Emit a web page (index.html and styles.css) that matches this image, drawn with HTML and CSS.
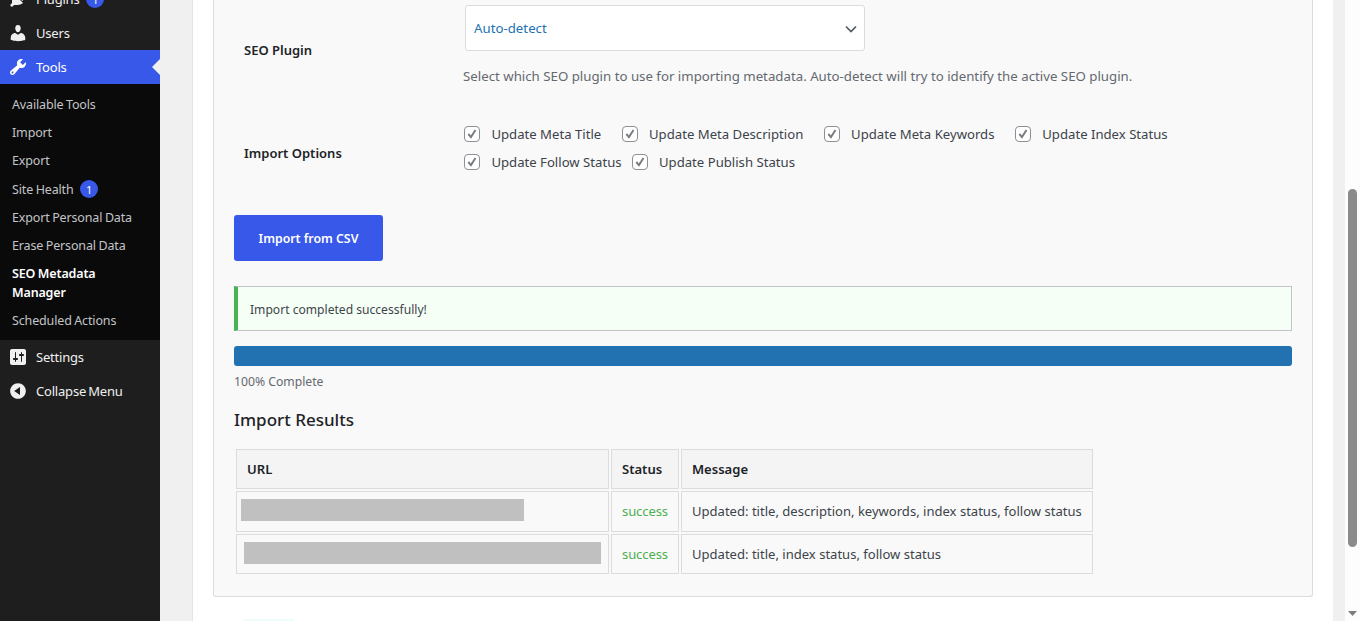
FILE: index.html
```html
<!DOCTYPE html>
<html lang="en">
  <head>
    <meta charset="UTF-8" />
    <title>SEO Metadata Manager</title>
    <link rel="stylesheet" href="styles.css">
  </head>
  <body>
    <nav class="sidebar">
      <ul class="menu">
        <li class="menu-item">
          <svg class="menu-icon" viewBox="0 0 20 20"><path d="M13.11 4.36L9.87 7.6 8 5.73l3.24-3.24c.35-.34 1.05-.2 1.56.32.52.51.66 1.21.31 1.55zm-8 1.77l.91-1.12 9.01 9.01-1.19.84c-.71.71-2.63 1.16-3.82 1.16H6.14L4.9 17.26c-.59.59-1.54.59-2.12 0-.59-.58-.59-1.53 0-2.12l1.24-1.24v-3.88c0-1.13.4-3.19 1.09-3.89zm7.26 3.97l3.24-3.24c.34-.35 1.04-.21 1.55.31.52.51.66 1.21.31 1.55l-3.24 3.25z"/></svg>
          Plugins <span class="count">1</span>
        </li>
        <li class="menu-item">
          <svg class="menu-icon" viewBox="0 0 20 20"><path d="M10 9.25c-2.27 0-2.73-3.44-2.73-3.44C7 4.02 7.82 2 9.97 2c2.16 0 2.98 2.02 2.71 3.81 0 0-.41 3.44-2.68 3.44zm0 2.57L12.72 10c2.39 0 4.52 2.33 4.52 4.53v2.49s-3.65 1.13-7.24 1.13c-3.65 0-7.24-1.13-7.24-1.13v-2.49c0-2.25 1.94-4.48 4.47-4.48z"/></svg>
          Users
        </li>
        <li class="menu-item current">
          <svg class="menu-icon" viewBox="0 0 20 20"><path d="M16.68 9.77c-1.34 1.34-3.3 1.67-4.95.99l-5.41 6.52c-.99.99-2.59.99-3.58 0s-.99-2.59 0-3.58l6.52-5.41c-.68-1.65-.35-3.61.99-4.95 1.28-1.28 3.12-1.62 4.72-1.06l-2.89 2.89 2.82 2.82 2.86-2.87c.53 1.58.18 3.39-1.08 4.65zM3.81 16.21c.4.39 1.04.39 1.43 0 .4-.4.4-1.04 0-1.43-.39-.4-1.03-.4-1.43 0-.39.39-.39 1.03 0 1.43z"/></svg>
          Tools
        </li>
        <li>
          <ul class="submenu">
            <li>Available Tools</li>
            <li>Import</li>
            <li>Export</li>
            <li>Site Health <span class="count">1</span></li>
            <li>Export Personal Data</li>
            <li>Erase Personal Data</li>
            <li class="active">SEO Metadata Manager</li>
            <li>Scheduled Actions</li>
          </ul>
        </li>
        <li class="menu-item">
          <svg class="menu-icon" viewBox="0 0 20 20"><path d="M18 16V4c0-1.1-.9-2-2-2H4c-1.1 0-2 .9-2 2v12c0 1.1.9 2 2 2h12c1.1 0 2-.9 2-2zM8 11h1c.55 0 1 .45 1 1s-.45 1-1 1H8v1.5c0 .28-.22.5-.5.5s-.5-.22-.5-.5V13H6c-.55 0-1-.45-1-1s.45-1 1-1h1V5.5c0-.28.22-.5.5-.5s.5.22.5.5V11zm5-2h-1c-.55 0-1-.45-1-1s.45-1 1-1h1V5.5c0-.28.22-.5.5-.5s.5.22.5.5V7h1c.55 0 1 .45 1 1s-.45 1-1 1h-1v5.5c0 .28-.22.5-.5.5s-.5-.22-.5-.5V9z"/></svg>
          Settings
        </li>
        <li class="menu-item">
          <svg class="menu-icon" viewBox="0 0 20 20"><path d="M10 2.16c4.33 0 7.84 3.51 7.84 7.84s-3.51 7.84-7.84 7.84S2.16 14.33 2.16 10 5.71 2.16 10 2.16zm2 11.72V6.12L6.18 9.97z"/></svg>
          Collapse Menu
        </li>
      </ul>
    </nav>

    <main class="content">
      <div class="wrap">
        <section class="panel">
          <div class="form-row plugin-row">
            <div class="form-label">SEO Plugin</div>
            <div class="form-field">
              <div class="select">
                Auto-detect
                <svg class="select-arrow" viewBox="0 0 12 8"><path d="M1 1.5l5 5 5-5" fill="none" stroke="#50575e" stroke-width="1.6"/></svg>
              </div>
              <p class="description">Select which SEO plugin to use for importing metadata. Auto-detect will try to identify the active SEO plugin.</p>
            </div>
          </div>

          <div class="form-row options-row">
            <div class="form-label">Import Options</div>
            <div class="checks">
              <label class="check"><span class="box"><svg viewBox="0 0 16 16"><path d="M3.8 8l3 3.5 5.2-8" fill="none" stroke="#777c80" stroke-width="2.2"/></svg></span>Update Meta Title</label>
              <label class="check"><span class="box"><svg viewBox="0 0 16 16"><path d="M3.8 8l3 3.5 5.2-8" fill="none" stroke="#777c80" stroke-width="2.2"/></svg></span>Update Meta Description</label>
              <label class="check"><span class="box"><svg viewBox="0 0 16 16"><path d="M3.8 8l3 3.5 5.2-8" fill="none" stroke="#777c80" stroke-width="2.2"/></svg></span>Update Meta Keywords</label>
              <label class="check"><span class="box"><svg viewBox="0 0 16 16"><path d="M3.8 8l3 3.5 5.2-8" fill="none" stroke="#777c80" stroke-width="2.2"/></svg></span>Update Index Status</label>
              <label class="check tight"><span class="box"><svg viewBox="0 0 16 16"><path d="M3.8 8l3 3.5 5.2-8" fill="none" stroke="#777c80" stroke-width="2.2"/></svg></span>Update Follow Status</label>
              <label class="check"><span class="box"><svg viewBox="0 0 16 16"><path d="M3.8 8l3 3.5 5.2-8" fill="none" stroke="#777c80" stroke-width="2.2"/></svg></span>Update Publish Status</label>
            </div>
          </div>

          <button class="import-btn">Import from CSV</button>

          <div class="notice">Import completed successfully!</div>

          <div class="progress"></div>
          <div class="progress-text">100% Complete</div>

          <h3 class="results-title">Import Results</h3>
          <table class="results">
            <thead>
              <tr>
                <th class="col-url">URL</th>
                <th class="col-status">Status</th>
                <th class="col-message">Message</th>
              </tr>
            </thead>
            <tbody>
              <tr class="row-first">
                <td class="url-cell"><span class="redacted first"></span></td>
                <td class="ok">success</td>
                <td>Updated: title, description, keywords, index status, follow status</td>
              </tr>
              <tr>
                <td class="url-cell"><span class="redacted second"></span></td>
                <td class="ok">success</td>
                <td>Updated: title, index status, follow status</td>
              </tr>
            </tbody>
          </table>
        </section>
        <div class="next-block"></div>
      </div>
    </main>

    <div class="scrollbar">
      <div class="thumb"></div>
      <svg class="scroll-arrow" viewBox="0 0 9 5"><path d="M0 0h9L4.5 5z"/></svg>
    </div>
  </body>
</html>
```

FILE: styles.css
```css
* {
  box-sizing: border-box;
}
html,
body {
  height: 100%;
}
body {
  margin: 0;
  display: flex;
  overflow: hidden;
  font-family: "Noto Sans", sans-serif;
  font-size: 13.25px;
  color: #3c434a;
  background-color: #f0f0f1;
}

/* admin menu */
.sidebar {
  width: 160px;
  flex-shrink: 0;
  background-color: #1e1e1e;
  color: #f0f0f1;
}
.menu,
.submenu {
  list-style: none;
  margin: 0;
  padding: 0;
}
.menu {
  margin-top: -18px;
}
.menu-item {
  position: relative;
  display: flex;
  align-items: center;
  height: 34px;
  padding-left: 8px;
  font-size: 13px;
  letter-spacing: -0.2px;
  word-spacing: -1px;
}
.menu-icon {
  width: 20px;
  height: 20px;
  margin-right: 8px;
  fill: #f0f0f1;
}
.menu-item .count {
  margin-left: 7px;
}
.menu-item.current {
  background-color: #3858e9;
  color: #fff;
}
.menu-item.current .menu-icon {
  fill: #fff;
}
.menu-item.current::after {
  content: "";
  position: absolute;
  right: 0;
  top: 9px;
  border: 8px solid transparent;
  border-right-color: #f0f0f1;
  border-left-width: 0;
}
.count {
  display: inline-flex;
  align-items: center;
  justify-content: center;
  width: 18px;
  height: 18px;
  margin-left: 4px;
  border-radius: 50%;
  background-color: #3858e9;
  color: #fff;
  font-size: 11px;
  letter-spacing: 0;
}
.submenu {
  padding: 11px 0 0.4px;
  background-color: #0a0a0a;
  color: #c3c4c7;
  font-size: 12.5px;
  letter-spacing: -0.15px;
  word-spacing: -0.5px;
}
.submenu li {
  padding: 0 12px 9.2px;
  line-height: 19px;
}
.submenu .active {
  color: #fff;
  font-weight: 600;
}

/* page content */
.content {
  flex: 1;
  min-width: 0;
  padding: 0 12px 0 32px;
}
.wrap {
  height: 100%;
  padding: 0 20px;
  background-color: #fff;
  border-left: 1px solid #e4e4e4;
}
.panel {
  height: 597px;
  padding: 0 20px;
  background-color: #f9f9f9;
  border: 1px solid #dcdcde;
  border-top: none;
  border-radius: 0 0 3px 3px;
}
.form-row {
  display: flex;
}
.form-label {
  width: 229px;
  padding-left: 10px;
  font-size: 13px;
  font-weight: 600;
  color: #1d2327;
}
.plugin-row {
  padding-top: 5px;
}
.plugin-row .form-label {
  padding-top: 36px;
}
.select {
  position: relative;
  display: flex;
  align-items: center;
  width: 400px;
  height: 46px;
  margin-left: 2px;
  padding-left: 8px;
  background-color: #fff;
  border: 1px solid #dcdcde;
  border-radius: 3px;
  color: #2271b1;
}
.select-arrow {
  position: absolute;
  right: 7px;
  top: 19px;
  width: 12px;
  height: 8px;
}
.description {
  margin: 16px 0 0;
  color: #646970;
}
.options-row {
  margin-top: 39px;
}
.options-row .form-label {
  padding-top: 20px;
}
.checks {
  display: flex;
  flex-wrap: wrap;
  width: 760px;
  row-gap: 8px;
  font-size: 13.15px;
}
.check {
  display: flex;
  align-items: center;
  height: 20px;
  margin-right: 19.4px;
  margin-left: 1px;
}
.check.tight {
  margin-right: 9px;
}
.box {
  width: 16px;
  height: 16px;
  margin-right: 11.4px;
  background-color: #fff;
  border: 1px solid #8c8f94;
  border-radius: 4px;
}
.box svg {
  display: block;
  width: 14px;
  height: 14px;
}
.import-btn {
  display: block;
  width: 149px;
  height: 46px;
  margin-top: 43px;
  padding: 0;
  border: none;
  border-radius: 3px;
  background-color: #3858e9;
  color: #fff;
  font-family: inherit;
  font-size: 12.3px;
  font-weight: 600;
}
.notice {
  height: 45px;
  margin-top: 25px;
  padding: 0 12px;
  line-height: 45px;
  background-color: #f6fff6;
  border: 1px solid #c3c4c7;
  border-left: 4px solid #46b450;
  font-size: 12.1px;
}
.progress {
  height: 20px;
  margin-top: 15px;
  background-color: #2271b1;
  border-radius: 3px;
}
.progress-text {
  margin-top: 7px;
  line-height: 18px;
  color: #646970;
  font-size: 12.2px;
}
.results-title {
  margin: 17px 0 0;
  line-height: 24px;
  font-size: 17px;
  font-weight: 500;
  color: #1d2327;
}
.results {
  margin-top: 15px;
  table-layout: fixed;
  width: 861px;
  border-spacing: 2px;
  font-size: 13.05px;
}
.results th,
.results td {
  padding: 0 10px;
  border: 1px solid #dcdcde;
  text-align: left;
}
.results th {
  height: 40px;
  padding-bottom: 1px;
  background-color: #f4f4f4;
  font-weight: 600;
  color: #1d2327;
}
.results td {
  height: 40px;
}
.results .row-first td {
  height: 41px;
  padding-bottom: 2px;
}
.col-url {
  width: 373px;
}
.col-status {
  width: 68px;
}
.col-message {
  width: 412px;
}
.results .url-cell {
  padding: 0;
}
.results .ok {
  color: #4caf50;
  letter-spacing: -0.1px;
}
.redacted {
  display: block;
  height: 22px;
  background-color: #c0c0c0;
}
.redacted.first {
  width: 283px;
  margin-left: 4px;
  margin-bottom: 2px;
}
.redacted.second {
  width: 357px;
  margin-left: 7px;
  margin-bottom: 2px;
}
.next-block {
  width: 50px;
  height: 2px;
  margin: 22px 0 0 31px;
  background-color: #eefcfc;
}

/* page scrollbar */
.scrollbar {
  position: relative;
  width: 15px;
  flex-shrink: 0;
  background-color: #fdfdfd;
}
.thumb {
  position: absolute;
  left: 3px;
  top: 189px;
  width: 9px;
  height: 358px;
  background-color: #8b8b8b;
  border-radius: 5px;
}
.scroll-arrow {
  position: absolute;
  left: 3px;
  bottom: 5px;
  width: 9px;
  height: 5px;
  fill: #7d7d7d;
}
```
